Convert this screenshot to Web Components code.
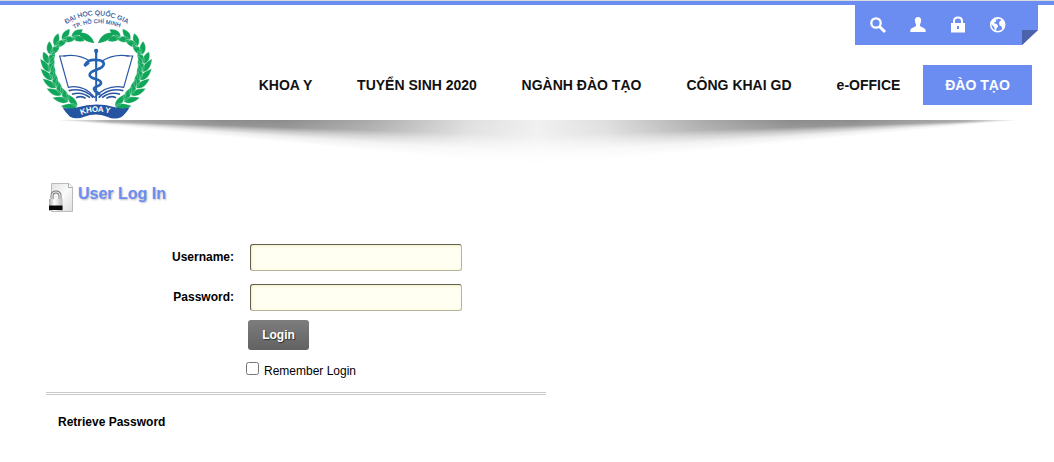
<!DOCTYPE html>
<html lang="vi">
<head>
<meta charset="utf-8">
<title>User Log In</title>
<style>
html,body{margin:0;background:#fff}
body{font-family:"Liberation Sans",Arial,sans-serif;color:#111;height:462px;overflow:hidden}
</style>
</head>
<body>
<login-page></login-page>
<script>
function define(name, html, setup) {
  const t = document.createElement('template');
  t.innerHTML = html;
  customElements.define(name, class extends HTMLElement {
    constructor() {
      super();
      this.attachShadow({mode: 'open'}).append(t.content.cloneNode(true));
      if (setup) setup(this.shadowRoot, this);
    }
  });
}

define('school-logo', `
<style>:host{display:block;width:135px;height:125px}svg{display:block}
text{font-family:"Liberation Sans",Arial,sans-serif}</style>
<svg width="135" height="125" viewBox="0 0 405 375">
  <defs>
    <path id="arc1" d="M109 72 Q198 18 296 74"/>
    <path id="arc2" d="M132 86 Q198 53 280 86"/>
    <path id="rib" d="M154 345 Q190 328 250 342"/>
  </defs>
  <g id="left" fill="#10a65a"></g>
  <g id="right" fill="#10a65a" transform="translate(397 0) scale(-1 1)"></g>
  <g fill="#29509c" stroke="#29509c" stroke-width=".4">
    <text font-size="20"><textPath href="#arc1" textLength="192">ĐẠI HỌC QUỐC GIA</textPath></text>
    <text font-size="17"><textPath href="#arc2" textLength="142">TP. HỒ CHÍ MINH</textPath></text>
  </g>
  <g fill="none" stroke="#2a56a4" stroke-width="3.500">
    <path d="M108 168 L89 168 L115 262 Q160 252 194 292 Q232 252 281 262 L308 168 L288 168"/>
    <path d="M181 184 Q145 160 100 168 M215 184 Q250 160 298 168"/>
    <path d="M116 272 Q160 261 190 293 M126 283 Q155 273 180 293 M138 293 Q154 286 167 295" stroke-width="5"/>
    <path d="M280 272 Q236 261 206 293 M270 283 Q241 273 216 293 M258 293 Q242 286 229 295" stroke-width="5"/>
  </g>
  <path d="M195 150 H202 L201 304 H196Z" fill="#2463b2"/>
  <circle cx="198.500" cy="153" r="6.500" fill="#2463b2"/>
  <path d="M165 195 C172 181 188 179 199 180 C220 179 227 191 216 201 C203 212 179 211 179 225 C179 239 214 235 213 249 C213 260 192 257 192 267 C193 275 204 277 208 282" fill="none" stroke="#2463b2" stroke-width="8" stroke-linecap="round"/>
  <path d="M161 193 L175 183 L179 191 L166 201Z" fill="#2463b2"/>
  <path d="M97 322 Q116 329 143 322 Q198 306 252 321 Q277 329 299 322 Q286 344 273 352 Q254 360 231 350 Q197 337 163 350 Q139 359 120 350 Q106 338 97 322Z" fill="#2554a2"/>
  <text fill="#fff" font-size="24" font-weight="bold"><textPath href="#rib" textLength="88">KHOA Y</textPath></text>
</svg>`, root => {
  // Wreath: pairs of leaves spread along a two-part stem.
  const segs = [[[142,318],[86,292],[60,240],[58,192]],[[58,192],[57,146],[98,98],[158,113]]];
  const pt = (s,t) => [0,1].map(i => (1-t)**3*s[0][i]+3*(1-t)**2*t*s[1][i]+3*(1-t)*t*t*s[2][i]+t**3*s[3][i]);
  let d = '';
  segs.forEach((s, top) => {
    const count = top ? 5 : 6;
    for (let k = 0; k < count; k++) {
      const a = pt(s,k/count), b = pt(s,k/count+.02), ang = Math.atan2(b[1]-a[1],b[0]-a[0]);
      [-.45,.4].forEach(o => {
        const c = Math.cos(ang+o), n = Math.sin(ang+o), len = top ? 41 : 50;
        const p = (x,y) => (a[0]+x*c-y*n).toFixed(1)+' '+(a[1]+x*n+y*c).toFixed(1);
        d += `M${p(0,0)}C${p(10,-14)} ${p(28,-13)} ${p(len,0)}C${p(28,10)} ${p(10,11)} ${p(0,0)}Z`;
      });
    }
  });
  const tip = '<path d="M144 98C166 94 185 106 193 129C172 127 153 117 144 98Z"/>';
  for (const id of ['left','right']) root.getElementById(id).innerHTML = `<path d="${d}" stroke="#fff" stroke-width=".8"/>` + tip;
});

define('tool-bar', `
<style>
:host{display:grid;grid-template-columns:repeat(4,40px) 1fr;align-items:center;width:183px;height:40px;box-sizing:border-box;padding-left:3px;background:#6b8df2;clip-path:polygon(0 0,100% 0,100% 25px,167px 100%,0 100%)}
svg{width:18px;height:18px;justify-self:center;fill:#fff}
i{align-self:end;justify-self:end;width:16px;height:15px;background:#4c63ab}
</style>
<svg viewBox="0 0 18 18"><circle cx="7" cy="7" r="4.700" fill="none" stroke="#fff" stroke-width="2.300"/><path d="M10.500 10.500L16 16" stroke="#fff" stroke-width="3"/></svg>
<svg viewBox="0 0 18 18"><path d="M9 1C6.600 1 5.600 2.700 5.900 5C6.100 7 7.100 8 7.100 9.500C7.100 11.300 1.300 11.500 1.300 14.400V16H16.700V14.400C16.700 11.500 10.900 11.300 10.900 9.500C10.900 8 11.900 7 12.100 5C12.400 2.700 11.400 1 9 1Z"/></svg>
<svg viewBox="0 0 18 18"><path fill-rule="evenodd" d="M2 7H16V16.500H2ZM8 10V13H10V10Z"/><path d="M5 8V5Q5 1.500 9 1.500T13 5V8" fill="none" stroke="#fff" stroke-width="2"/></svg>
<svg viewBox="0 0 18 18"><circle cx="8.700" cy="8.800" r="7" fill="none" stroke="#fff" stroke-width="1.500"/><path d="M2.300 5Q5 1 10.500 1.800L8.500 3.500L7 3.500L7.200 5.300L4.800 7L8 8.300L9.200 10.500L7.400 12.500L7 15.500L5.700 14L5.200 11L3 9L1.500 7.300ZM11 5L13.500 3.500L15.500 7.500L15 11.500L13.600 13.500L12.500 10.500L10.500 9.300L10 7Z"/></svg>
<i></i>`);

define('nav-item', `
<style>:host{display:flex;align-items:center;justify-content:center;height:40px;box-sizing:border-box;font-weight:bold;font-size:14px;white-space:nowrap;color:#111}
:host([active]){background:#6b8df2;color:#fff}</style><slot></slot>`);

define('main-nav', `
<style>:host{display:grid;grid-template-columns:99px 164px 165px 150px 109px 109px}</style>
<nav-item>KHOA Y</nav-item><nav-item>TUYỂN SINH 2020</nav-item><nav-item>NGÀNH ĐÀO TẠO</nav-item><nav-item>CÔNG KHAI GD</nav-item><nav-item>e-OFFICE</nav-item><nav-item active>ĐÀO TẠO</nav-item>`);

define('header-shadow', `
<style>
:host{display:flex;height:48px;padding:0 32px 0 52px}
div{flex:1;
background:conic-gradient(from 90deg at 0 0,rgb(140 140 140) 0deg,rgb(140 140 140 / .9) 1.800deg,rgb(140 140 140 / .5) 2.800deg,rgb(140 140 140 / .15) 4deg,transparent 5.500deg);
mask-image:linear-gradient(90deg,transparent,rgb(0 0 0 / .75) 12%,#000 35%,#000 48%,rgb(0 0 0 / .72) 66%,rgb(0 0 0 / .28) 86%,rgb(0 0 0 / .13) 100%)}
div+div{transform:scaleX(-1)}
</style><div></div><div></div>`);

define('page-header', `
<style>
:host{display:block;height:168px}
.bar{height:5px;box-sizing:border-box;border-top:1px solid #d9dbdc;background:#6b8df2}
.row{display:flex;height:115px;padding:0 22px 0 30px;justify-content:space-between}
school-logo{margin-top:-5px}
.right{display:flex;flex-direction:column;align-items:flex-end;gap:20px}
tool-bar{margin-right:-6px}
</style>
<div class="bar"></div>
<div class="row"><school-logo></school-logo><div class="right"><tool-bar></tool-bar><main-nav></main-nav></div></div>
<header-shadow></header-shadow>`);

define('page-title', `
<style>:host{display:flex;gap:4px;height:32px}
h1{margin:4px 0 0;font-size:16px;line-height:18px;color:#6b8df2;text-shadow:1px 1px 2px #bbb}
svg{display:block}</style>
<svg width="26" height="32" viewBox="0 0 26 32">
  <defs><linearGradient id="p" x2="1" y2="1"><stop stop-color="#e2e2e2"/><stop offset=".5" stop-color="#fafafa"/><stop offset="1" stop-color="#ddd"/></linearGradient>
  <linearGradient id="m" x2="1"><stop stop-color="#aaa"/><stop offset=".4" stop-color="#fff"/><stop offset="1" stop-color="#bbb"/></linearGradient></defs>
  <path d="M3.500 2.500H21L24.500 6V30.500H3.500Z" fill="url(#p)" stroke="#bbb"/><path d="M20.500 2.500V6.500H24.500" fill="#fff" stroke="#aaa"/>
  <path d="M4 19V15Q4 11 8 11T12 15V19" fill="none" stroke="#777" stroke-width="3"/><path d="M4 19V15Q4 11 8 11T12 15V19" fill="none" stroke="#eee" stroke-width="1.200"/>
  <path d="M1 18H14.500V30H1Z" fill="url(#m)"/><path d="M1 24.500H14.500V29H1Z" fill="#080808"/>
</svg><h1><slot></slot></h1>`);

define('form-field', `
<style>:host{display:grid;grid-template-columns:188px 212px;column-gap:16px;align-items:center;height:27px}
label{text-align:right;font-size:12px;font-weight:bold;color:#000;padding-bottom:2px}
input{width:212px;height:27px;box-sizing:border-box;margin:0;padding:2px 6px;border:1px solid;border-color:#63604a #b9b594 #b9b594 #63604a;border-radius:3px;background:#fffff2;box-shadow:inset 1px 1px 3px #f3efcb;outline:0}</style>
<label for="f"><slot></slot></label><input id="f">`, (root, el) => { if (el.hasAttribute('secret')) root.querySelector('input').type = 'password'; });

define('login-button', `
<style>:host{display:block;width:61px;height:30px}
button{width:100%;height:100%;padding:0;border:0;border-radius:3px;background:linear-gradient(#7d7d7d,#626262);color:#fff;font:bold 12px "Liberation Sans",Arial,sans-serif;text-shadow:1px 1px 1px #333}</style>
<button><slot></slot></button>`);

define('remember-box', `
<style>:host{display:flex;height:16px;font-size:12px;line-height:16px;color:#000}
label{display:flex;gap:5px}input{width:13px;height:13px;margin:0}span{padding-top:1px}</style>
<label><input type="checkbox"><span><slot></slot></span></label>`);

define('login-page', `
<style>
:host{display:block}
main{display:flex;flex-direction:column;align-items:flex-start;padding:13px 0 0 46px}
page-title{margin:0 0 31px 2px}
form-field+form-field{margin-top:13px}
login-button{margin:9px 0 12px 202px}
remember-box{margin:0 0 14px 200px}
hr{width:500px;height:3px;box-sizing:border-box;margin:0 0 19px;border:solid #c9c9c9;border-width:1px 0}
a{margin-left:12px;font-size:12px;font-weight:bold;line-height:16px;color:#000}
</style>
<page-header></page-header>
<main>
<page-title>User Log In</page-title>
<form-field>Username:</form-field>
<form-field secret>Password:</form-field>
<login-button>Login</login-button>
<remember-box>Remember Login</remember-box>
<hr><a>Retrieve Password</a>
</main>`);
</script>
</body>
</html>
